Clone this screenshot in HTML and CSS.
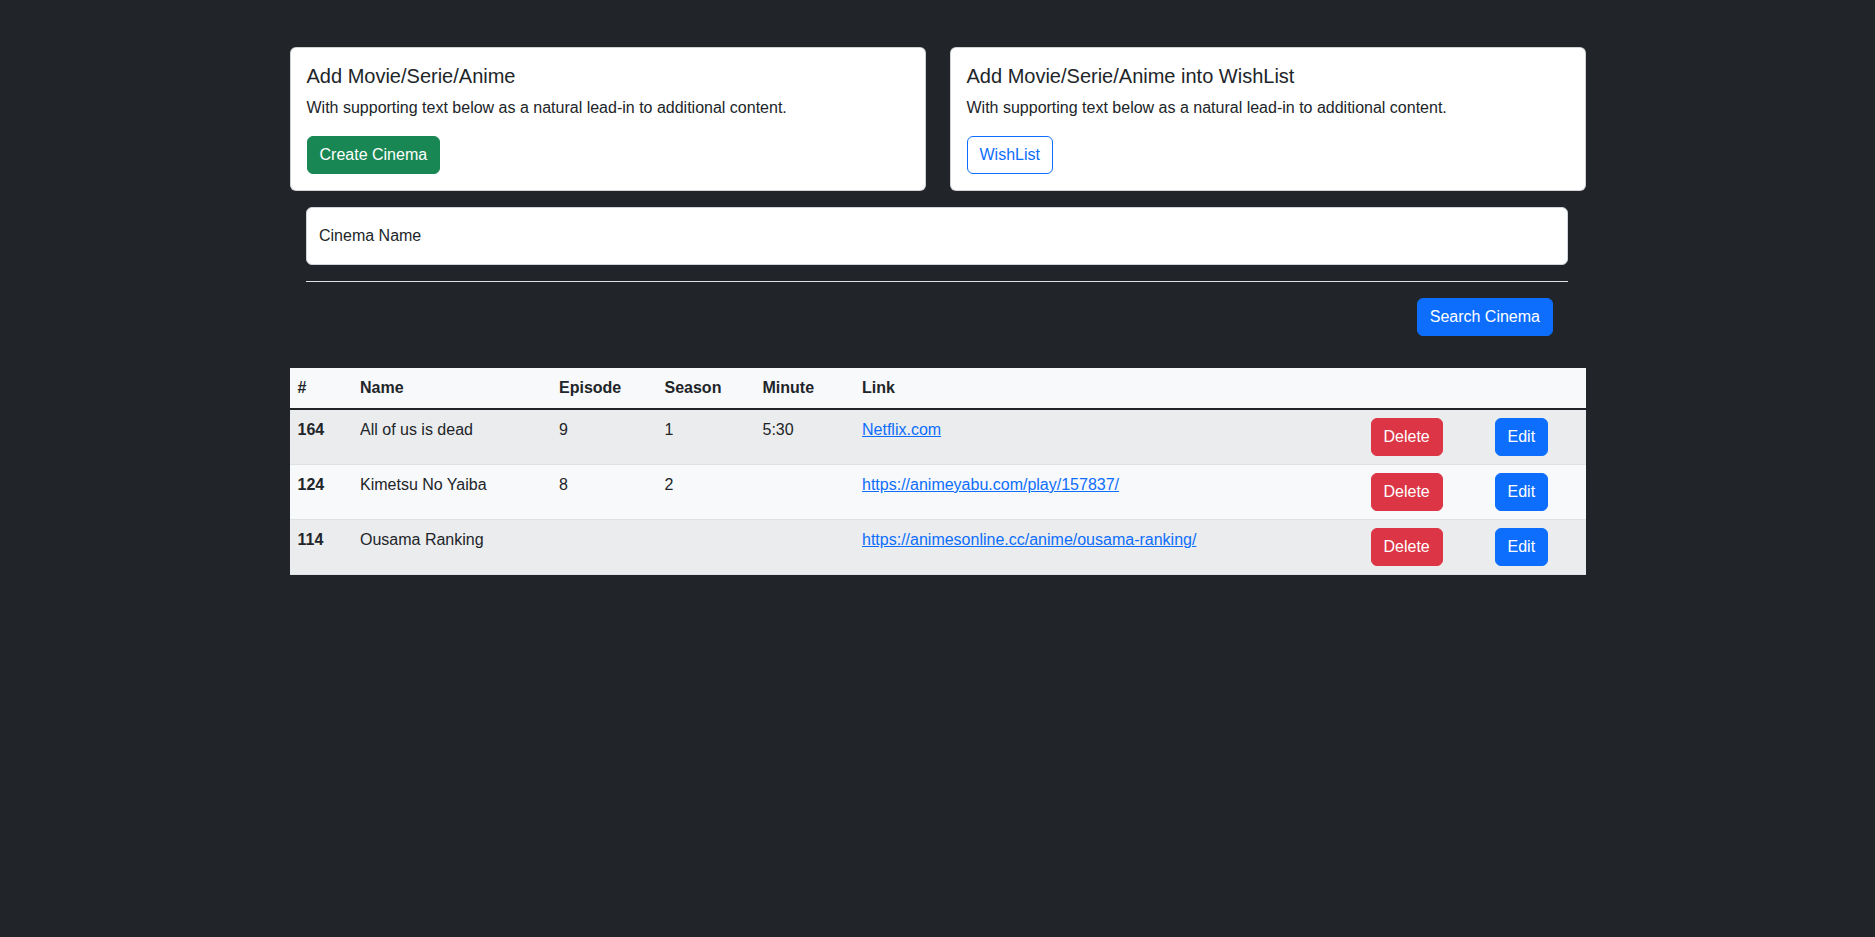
FILE: index.html
```html
<!DOCTYPE html>
<html lang="en">
<head>
<meta charset="utf-8">
<title>Cinema</title>
<link rel="stylesheet" href="styles.css">
</head>
<body>
<main class="container">
  <div class="cards">
    <section class="card">
      <h5 class="card-title">Add Movie/Serie/Anime</h5>
      <p class="card-text">With supporting text below as a natural lead-in to additional content.</p>
      <a class="btn btn-success" href="#">Create Cinema</a>
    </section>
    <section class="card">
      <h5 class="card-title">Add Movie/Serie/Anime into WishList</h5>
      <p class="card-text">With supporting text below as a natural lead-in to additional content.</p>
      <a class="btn btn-outline-primary" href="#">WishList</a>
    </section>
  </div>

  <form class="search">
    <div class="floating">
      <input class="field" type="text" id="cinemaName">
      <label class="float-label" for="cinemaName">Cinema Name</label>
    </div>
    <hr class="divider">
    <div class="search-actions">
      <button class="btn btn-primary" type="button">Search Cinema</button>
    </div>
  </form>

  <table class="table">
    <colgroup>
      <col class="c-id"><col class="c-name"><col class="c-ep"><col class="c-season"><col class="c-min"><col class="c-link"><col class="c-del"><col class="c-edit">
    </colgroup>
    <thead>
      <tr><th>#</th><th>Name</th><th>Episode</th><th>Season</th><th>Minute</th><th>Link</th><th></th><th></th></tr>
    </thead>
    <tbody>
      <tr>
        <th>164</th><td>All of us is dead</td><td>9</td><td>1</td><td>5:30</td>
        <td><a class="link" href="#">Netflix.com</a></td>
        <td><button class="btn btn-danger" type="button">Delete</button></td>
        <td><button class="btn btn-primary" type="button">Edit</button></td>
      </tr>
      <tr>
        <th>124</th><td>Kimetsu No Yaiba</td><td>8</td><td>2</td><td></td>
        <td><a class="link" href="#">https://animeyabu.com/play/157837/</a></td>
        <td><button class="btn btn-danger" type="button">Delete</button></td>
        <td><button class="btn btn-primary" type="button">Edit</button></td>
      </tr>
      <tr>
        <th>114</th><td>Ousama Ranking</td><td></td><td></td><td></td>
        <td><a class="link" href="#">https://animesonline.cc/anime/ousama-ranking/</a></td>
        <td><button class="btn btn-danger" type="button">Delete</button></td>
        <td><button class="btn btn-primary" type="button">Edit</button></td>
      </tr>
    </tbody>
  </table>
</main>
</body>
</html>
```

FILE: styles.css
```css
* { box-sizing: border-box; }

html, body {
  margin: 0;
  background: #212529;
}

body {
  font-family: "Liberation Sans", Arial, sans-serif;
  font-size: 16px;
  line-height: 1.5;
  color: #212529;
  min-height: 937px;
}

.container {
  width: 1296px;
  margin: 0 auto;
  padding-top: 47px;
}

.cards {
  display: grid;
  grid-template-columns: 1fr 1fr;
  gap: 24px;
  margin-bottom: 16px;
}

.card {
  background: #fff;
  border: 1px solid rgba(0, 0, 0, 0.175);
  border-radius: 6px;
  padding: 16px;
}

.card-title {
  margin: 0 0 8px;
  font-size: 20px;
  line-height: 1.2;
  font-weight: 500;
}

.card-text {
  margin: 0 0 16px;
}

.btn {
  display: inline-block;
  font-family: inherit;
  font-size: 16px;
  line-height: 24px;
  padding: 6px 12px;
  border: 1px solid transparent;
  border-radius: 6px;
  text-decoration: none;
  cursor: pointer;
  color: #fff;
}

.btn-success { background: #198754; border-color: #198754; }
.btn-primary { background: #0d6efd; border-color: #0d6efd; }
.btn-danger { background: #dc3545; border-color: #dc3545; }
.btn-outline-primary { background: transparent; border-color: #0d6efd; color: #0d6efd; }

.search {
  padding: 0 17.5px 0 16.5px;
  margin-bottom: 32px;
}

.floating {
  position: relative;
}

.field {
  display: block;
  width: 100%;
  height: 58px;
  padding: 16px 12px;
  font-family: inherit;
  font-size: 16px;
  color: #212529;
  background: #fff;
  border: 1px solid #ced4da;
  border-radius: 6px;
  outline: none;
}

.float-label {
  position: absolute;
  top: 0;
  left: 0;
  padding: 16px 12px;
  border: 1px solid transparent;
  line-height: 24px;
  color: #212529;
  pointer-events: none;
}

.divider {
  margin: 16px 0;
  border: 0;
  border-top: 1px solid #dee2e6;
  height: 0;
}

.search-actions {
  display: flex;
  justify-content: flex-end;
  padding-right: 15px;
}

.table {
  width: 100%;
  border-collapse: collapse;
  table-layout: fixed;
  background: #f8f9fa;
  color: #212529;
}

.c-id { width: 62.5px; }
.c-name { width: 199px; }
.c-ep { width: 105.5px; }
.c-season { width: 98px; }
.c-min { width: 99.5px; }
.c-link { width: 508.5px; }
.c-del { width: 124px; }
.c-edit { width: 99px; }

.table th,
.table td {
  padding: 8px;
  text-align: left;
  vertical-align: top;
  line-height: 24px;
}

.table th { font-weight: 700; }

.table thead th {
  background: #f8f9fa;
  border-bottom: 2px solid #212529;
}

.table tbody td,
.table tbody th {
  border-bottom: 1px solid #dee2e6;
}

.table tbody tr:nth-child(odd) td,
.table tbody tr:nth-child(odd) th {
  background: #ebeced;
}

.link {
  color: #0d6efd;
  text-decoration: underline;
}
```
